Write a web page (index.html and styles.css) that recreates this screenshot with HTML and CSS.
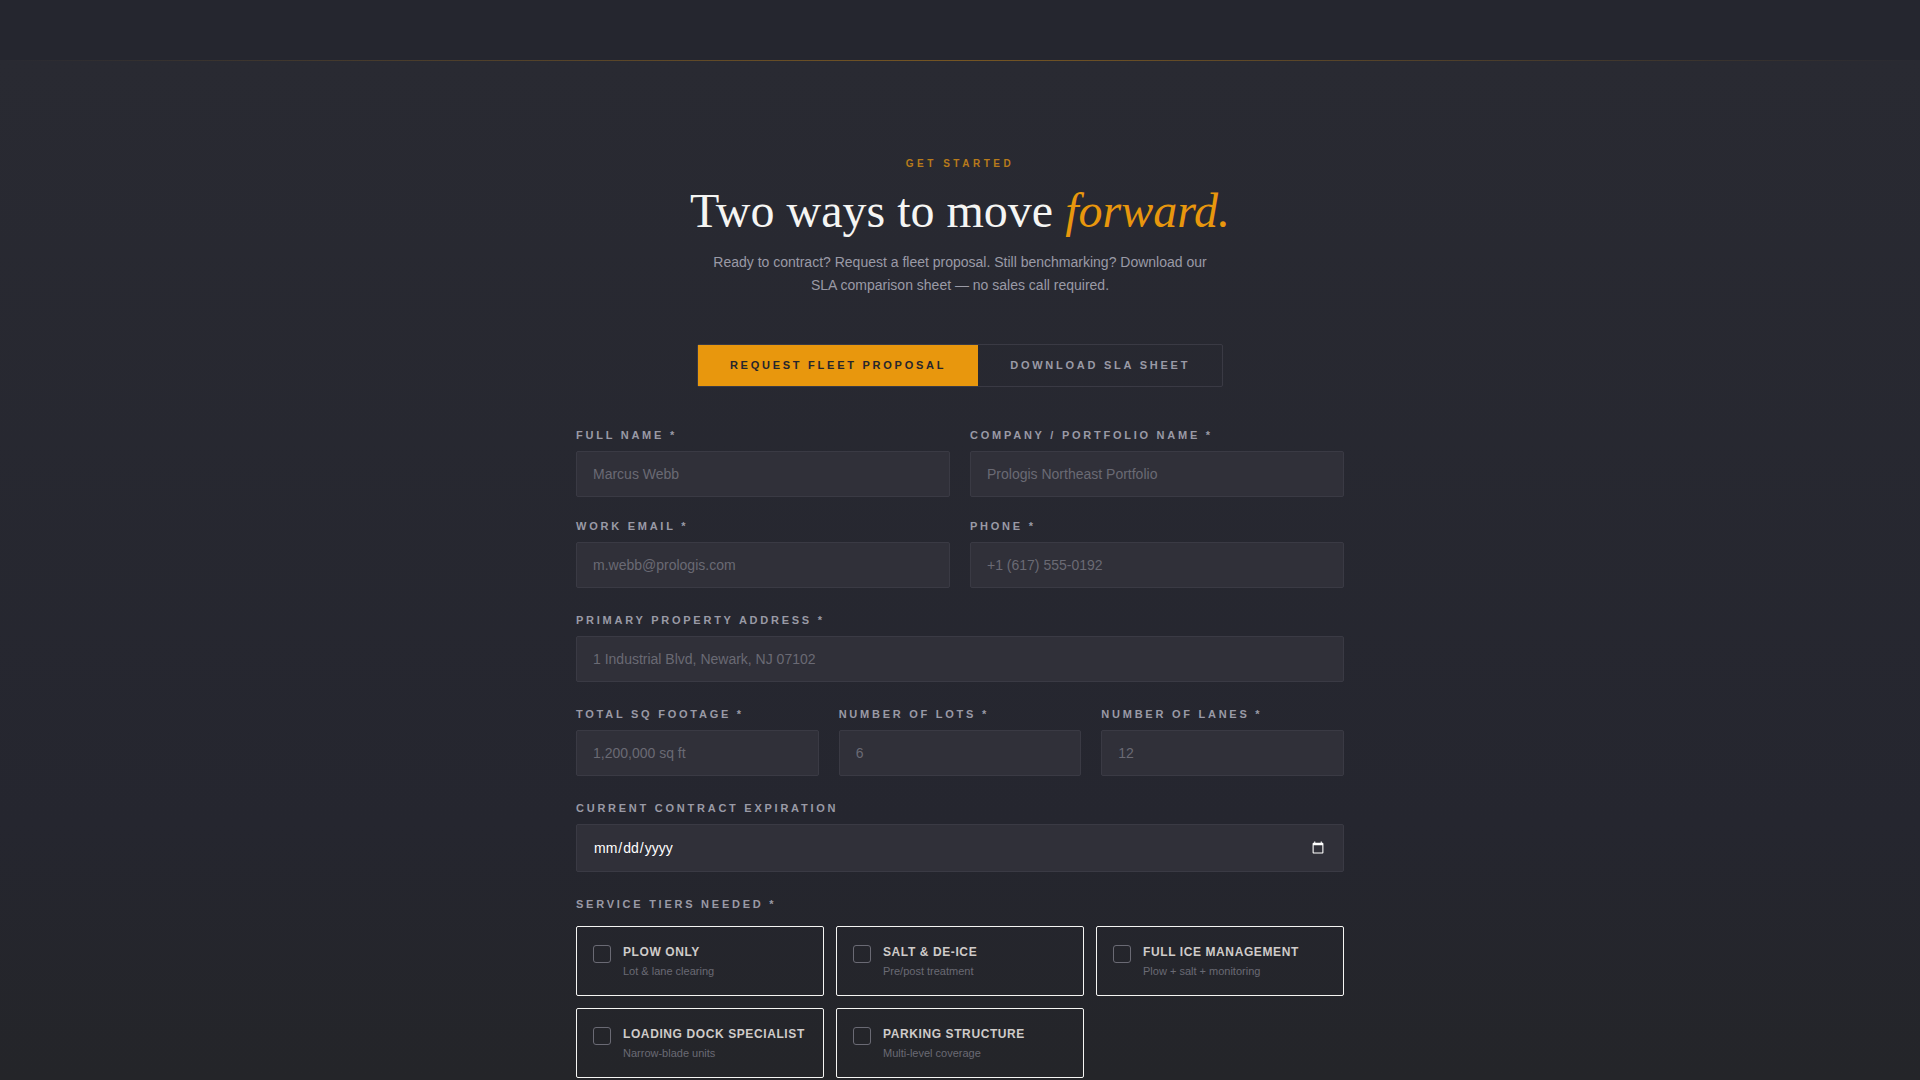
FILE: index.html
```html
<!DOCTYPE html>
<html lang="en">
<head>
<meta charset="utf-8">
<meta name="viewport" content="width=device-width, initial-scale=1">
<title>Get Started</title>
<link rel="stylesheet" href="styles.css">
</head>
<body>
<div class="band"></div>
<main class="contact">
  <div class="contact-rule"></div>
  <header class="intro">
    <p class="eyebrow">Get Started</p>
    <h1 class="title">Two ways to move <em>forward.</em></h1>
    <p class="lead">Ready to contract? Request a fleet proposal. Still benchmarking? Download our SLA comparison sheet — no sales call required.</p>
  </header>
  <div class="tabs">
    <button class="tab tab-active" type="button">Request Fleet Proposal</button>
    <button class="tab" type="button">Download SLA Sheet</button>
  </div>
  <form class="form">
    <div class="grid grid-two">
      <div class="field"><label class="label" for="name">Full Name *</label><input class="input" id="name" type="text" placeholder="Marcus Webb"></div>
      <div class="field"><label class="label" for="company">Company / Portfolio Name *</label><input class="input" id="company" type="text" placeholder="Prologis Northeast Portfolio"></div>
      <div class="field"><label class="label" for="email">Work Email *</label><input class="input" id="email" type="email" placeholder="m.webb@prologis.com"></div>
      <div class="field"><label class="label" for="phone">Phone *</label><input class="input" id="phone" type="tel" placeholder="+1 (617) 555-0192"></div>
    </div>
    <div class="field"><label class="label" for="address">Primary Property Address *</label><input class="input" id="address" type="text" placeholder="1 Industrial Blvd, Newark, NJ 07102"></div>
    <div class="grid grid-three">
      <div class="field"><label class="label" for="footage">Total Sq Footage *</label><input class="input" id="footage" type="text" placeholder="1,200,000 sq ft"></div>
      <div class="field"><label class="label" for="lots">Number of Lots *</label><input class="input" id="lots" type="number" placeholder="6"></div>
      <div class="field"><label class="label" for="lanes">Number of Lanes *</label><input class="input" id="lanes" type="number" placeholder="12"></div>
    </div>
    <div class="field"><label class="label" for="expiry">Current Contract Expiration</label><input class="input input-date" id="expiry" type="date"></div>
    <fieldset class="tiers">
      <legend class="label tiers-label">Service Tiers Needed *</legend>
      <div class="tier-grid">
        <label class="tier"><input class="check" type="checkbox"><span class="tier-text"><span class="tier-name">Plow Only</span><span class="tier-note">Lot &amp; lane clearing</span></span></label>
        <label class="tier"><input class="check" type="checkbox"><span class="tier-text"><span class="tier-name">Salt &amp; De-Ice</span><span class="tier-note">Pre/post treatment</span></span></label>
        <label class="tier"><input class="check" type="checkbox"><span class="tier-text"><span class="tier-name">Full Ice Management</span><span class="tier-note">Plow + salt + monitoring</span></span></label>
        <label class="tier"><input class="check" type="checkbox"><span class="tier-text"><span class="tier-name">Loading Dock Specialist</span><span class="tier-note">Narrow-blade units</span></span></label>
        <label class="tier"><input class="check" type="checkbox"><span class="tier-text"><span class="tier-name">Parking Structure</span><span class="tier-note">Multi-level coverage</span></span></label>
      </div>
    </fieldset>
  </form>
</main>
</body>
</html>
```
FILE: styles.css
```css
* { box-sizing: border-box; }

body {
  margin: 0;
  background: #242529;
  color: #f5f5f3;
  font-family: "Liberation Sans", Arial, sans-serif;
}

.band {
  height: 60px;
  background: #25262f;
}

.contact {
  padding: 0 24px;
  background: linear-gradient(#292a32, #25262f 75%, #242529);
}

.contact-rule {
  height: 1px;
  margin: 0 -24px;
  background: linear-gradient(90deg, transparent, rgba(232, 151, 13, 0.4), transparent);
}

.intro {
  display: flex;
  flex-direction: column;
  align-items: center;
  padding-top: 93px;
  text-align: center;
}

.eyebrow {
  margin: 0 0 13px;
  color: #b87b1b;
  font-size: 10px;
  font-weight: 700;
  line-height: 20px;
  letter-spacing: 0.35em;
  text-transform: uppercase;
}

.title {
  margin: 0 0 16px;
  font-family: "Liberation Serif", "Times New Roman", serif;
  font-size: 48px;
  font-weight: 400;
  line-height: 48px;
}

.title em { color: #e8970d; }

.lead {
  max-width: 520px;
  margin: 0;
  color: #9a9aa6;
  font-size: 14px;
  line-height: 23px;
}

.tabs {
  display: flex;
  width: fit-content;
  margin: 47px auto 40px;
  border: 1px solid #3a3a44;
  border-radius: 2px;
}

.tab {
  padding: 14px 32px;
  border: 0;
  background: transparent;
  color: #9a9aa6;
  font: 700 11px/13px "Liberation Sans", Arial, sans-serif;
  letter-spacing: 0.25em;
  text-transform: uppercase;
}

.tab-active {
  background: #e8970d;
  color: #25252d;
}

.form {
  display: flex;
  flex-direction: column;
  gap: 24px;
  max-width: 768px;
  margin: 0 auto;
}

.grid {
  display: grid;
  gap: 21px 20px;
}

.grid-two { grid-template-columns: repeat(2, 1fr); }
.grid-three { grid-template-columns: repeat(3, 1fr); }

.field {
  display: flex;
  flex-direction: column;
  gap: 8px;
  min-width: 0;
}

.label {
  color: #9a9aa6;
  font-size: 11px;
  font-weight: 700;
  line-height: 16px;
  letter-spacing: 0.25em;
  text-transform: uppercase;
  white-space: nowrap;
}

.input {
  width: 100%;
  height: 46px;
  padding: 0 16px;
  border: 1px solid #3a3a44;
  border-radius: 2px;
  background: #303039;
  color: #ffffff;
  font: 14px "Liberation Sans", Arial, sans-serif;
  appearance: none;
}

.input::placeholder { color: #6a6a74; }

.input-date {
  height: 48px;
  color-scheme: dark;
}

.tiers {
  margin: 0;
  padding: 0;
  border: 0;
}

.tiers-label {
  margin-bottom: 14px;
  padding: 0;
}

.tier-grid {
  display: grid;
  grid-template-columns: repeat(3, 1fr);
  gap: 12px;
}

.tier {
  display: flex;
  gap: 12px;
  padding: 16px;
  border: 1px solid #f5f5f3;
  border-radius: 2px;
}

.check {
  flex: none;
  width: 18px;
  height: 18px;
  margin: 2px 0 0;
  border: 1px solid #6a6a74;
  border-radius: 3px;
  appearance: none;
}

.tier-text {
  display: flex;
  flex-direction: column;
  gap: 2px;
}

.tier-name {
  color: #cfcbc9;
  font-size: 12px;
  font-weight: 700;
  line-height: 18px;
  letter-spacing: 0.05em;
  text-transform: uppercase;
  white-space: nowrap;
}

.tier-note {
  color: #6a6a74;
  font-size: 11px;
  line-height: 16px;
}
```
